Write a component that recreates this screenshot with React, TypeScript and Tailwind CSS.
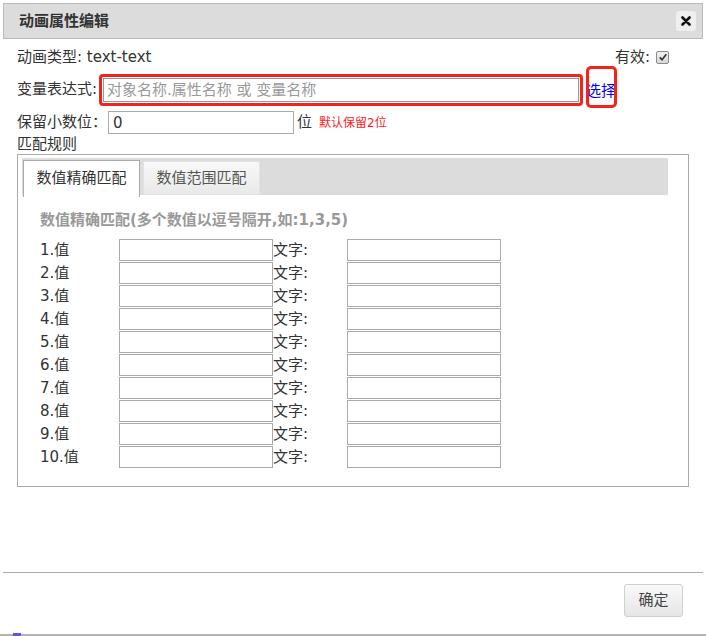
import React from 'react';

const FONT = { fontFamily: '"DejaVu Sans", "Noto Sans CJK SC", sans-serif' };

const rows = ['1.值', '2.值', '3.值', '4.值', '5.值', '6.值', '7.值', '8.值', '9.值', '10.值'];

function CheckBox() {
    return (
        <span className="inline-flex w-[13px] h-[13px] items-center justify-center rounded-[2px] border border-[#8a8a8a] bg-gradient-to-b from-[#f2f2f2] to-[#d8d8d8]">
            <svg viewBox="0 0 12 12" className="w-[10px] h-[10px]">
                <path d="M2 6.5 L4.8 9.2 L10 2.8" fill="none" stroke="#333" strokeWidth="2" />
            </svg>
        </span>
    );
}

export default function App() {
    return (
        <div className="w-[706px] h-[636px] bg-white flex flex-col text-[15px] text-[#333]" style={FONT}>
            {/* 标题栏 */}
            <div className="mx-[3px] mt-[3px] h-[36px] shrink-0 bg-[#dcdcdc] border border-[#bbbbbb] flex items-center justify-between pl-[15px] pr-[6px]">
                <span className="font-bold text-[15px] text-[#333]">动画属性编辑</span>
                <button className="w-[20px] h-[20px] rounded-[3px] bg-[#efefef] flex items-center justify-center">
                    <svg viewBox="0 0 10 10" className="w-[10px] h-[10px]">
                        <path d="M1.5 1.5 L8.5 8.5 M8.5 1.5 L1.5 8.5" stroke="#111" strokeWidth="2.6" strokeLinecap="round" />
                    </svg>
                </button>
            </div>

            {/* 动画类型 */}
            <div className="mt-[8px] h-[20px] shrink-0 flex items-center justify-between pl-[17px] pr-[37px] leading-[20px]">
                <span>动画类型: text-text</span>
                <span className="flex items-center gap-[6px]">
                    <span>有效:</span>
                    <CheckBox />
                </span>
            </div>

            {/* 变量表达式 */}
            <div className="h-[41px] shrink-0 flex items-start pl-[17px]">
                <span className="w-[82px] mt-[12px] leading-[20px]">变量表达式:</span>
                <div className="mt-[7px] border-[3px] border-[#f5221b] rounded-[4px] p-px">
                    <input
                        className="block w-[476px] h-[24px] border border-[#999] px-[3px] text-[15px] outline-none placeholder:text-[#999]"
                        style={FONT}
                        placeholder="对象名称.属性名称 或 变量名称"
                    />
                </div>
                <span className="relative ml-[3px] mt-[14px] leading-[20px] text-[#0000ff]">
                    选择
                    <span className="absolute left-0 -right-px -top-[15px] -bottom-[7px] border-[3px] border-[#f5221b] rounded-[5px]" />
                </span>
            </div>

            {/* 保留小数位 */}
            <div className="mt-[3px] h-[23px] shrink-0 flex items-center pl-[17px]">
                <span className="w-[91px]">保留小数位：</span>
                <input
                    className="w-[186px] h-[23px] border border-[#aaa] px-[4px] text-[15px] outline-none"
                    style={FONT}
                    defaultValue="0"
                />
                <span className="ml-[3px]">位</span>
                <span className="ml-[7px] text-[12px] text-[#ff1a1a]">默认保留2位</span>
            </div>

            <div className="h-[20px] shrink-0 pl-[17px] leading-[20px]">匹配规则</div>

            {/* 匹配规则面板 */}
            <div className="ml-[17px] w-[672px] h-[333px] shrink-0 border border-[#aaa]">
                <div className="ml-[4px] mt-[3px] w-[646px] h-[37px] bg-[#dcdcdc] flex items-start">
                    <div className="relative z-10 ml-[1px] mt-[2px] w-[117px] h-[37px] bg-white border border-b-0 border-[#aaa] flex items-center justify-center pb-[2px] text-[#333]">
                        数值精确匹配
                    </div>
                    <div className="ml-[3px] mt-[3px] w-[117px] h-[34px] bg-gradient-to-b from-[#f8f8f8] to-[#e9e9e9] border border-[#e2e2e2] flex items-center justify-center text-[#555]">
                        数值范围匹配
                    </div>
                </div>

                <div className="mt-[15px] pl-[22px] h-[20px] leading-[20px] font-bold text-[#999]">
                    数值精确匹配(多个数值以逗号隔开,如:1,3,5)
                </div>

                <div className="mt-[9px] pl-[22px] flex flex-col">
                    {rows.map((label) => (
                        <div key={label} className="h-[23px] flex items-start">
                            <span className="w-[79px] leading-[22px]">{label}</span>
                            <input className="w-[154px] h-[22px] border border-[#aaa] outline-none" />
                            <span className="w-[74px] leading-[22px]">文字:</span>
                            <input className="w-[154px] h-[22px] border border-[#aaa] outline-none" />
                        </div>
                    ))}
                </div>
            </div>

            <div className="flex-1" />

            {/* 底部 */}
            <div className="mx-[3px] h-px shrink-0 bg-[#aaa]" />
            <div className="h-[61px] shrink-0 flex justify-end items-start pt-[11px] pr-[23px]">
                <button className="w-[59px] h-[33px] rounded-[3px] border border-[#cfcfcf] bg-gradient-to-b from-[#f9f9f9] to-[#e6e6e6] text-[15px] text-[#444]" style={FONT}>
                    确定
                </button>
            </div>
            <div className="h-[2px] shrink-0 bg-[#b4b4b4] relative">
                <span className="absolute left-[13px] -top-px w-[8px] h-[3px] bg-[#5a5ad6]" />
            </div>
        </div>
    );
}
